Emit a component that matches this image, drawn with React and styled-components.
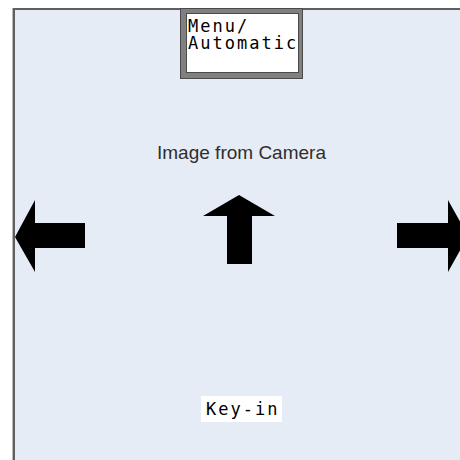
import React from "react";
import styled, { createGlobalStyle } from "styled-components";

const Global = createGlobalStyle`
  html, body { margin: 0; padding: 0; background: #ffffff; overflow: hidden; }
  body { width: 460px; height: 460px; }
`;

const Page = styled.div`
  padding: 8px 0 0 13px;
  width: 460px;
  height: 460px;
  box-sizing: border-box;
  overflow: hidden;
`;

const Panel = styled.div`
  width: 455px;
  height: 470px;
  box-sizing: border-box;
  background: #e6ecf6;
  border-left: 2px solid #5f5f5f;
  border-top: 2px solid #5f5f5f;
  box-shadow: -1px 0 0 #b8b8b8;
  display: flex;
  flex-direction: column;
  align-items: center;
`;

const MenuBox = styled.div`
  margin-top: -2px;
  width: 123px;
  height: 71px;
  box-sizing: border-box;
  border: 1px solid #4a4a4a;
  background: #808080;
  padding: 4px 4px 5px 5px;
  display: flex;
`;

const MenuInner = styled.div`
  flex: 1;
  background: #ffffff;
  border: 1px solid #4a4a4a;
  padding: 4px 0 0 1px;
`;

const MonoText = styled.div`
  font-family: "DejaVu Sans Mono", "Liberation Mono", monospace;
  font-size: 17px;
  line-height: 17px;
  letter-spacing: 2px;
  color: #000;
  white-space: pre;
`;

const Caption = styled.div`
  margin-top: 64px;
  font-family: "Liberation Sans", Arial, sans-serif;
  font-size: 19px;
  line-height: 20px;
  color: #2e2e2e;
`;

const ArrowRow = styled.div`
  margin-top: 32px;
  width: 100%;
  display: flex;
  justify-content: space-between;
  align-items: flex-start;
`;

const SideArrow = styled.svg`
  display: block;
  margin-top: 5px;
  flex: none;
`;

const UpArrow = styled.svg`
  display: block;
  flex: none;
  margin-right: 4px;
`;

const KeyIn = styled.div`
  margin-top: 124px;
  width: 81px;
  height: 26px;
  background: #ffffff;
  display: flex;
  align-items: center;
  padding-left: 5px;
  box-sizing: border-box;
`;

export default function App() {
  return (
    <>
      <Global />
      <Page>
        <Panel>
          <MenuBox>
            <MenuInner>
              <MonoText>{"Menu/\nAutomatic"}</MonoText>
            </MenuInner>
          </MenuBox>
          <Caption>Image from Camera</Caption>
          <ArrowRow>
            <SideArrow width="70" height="72" viewBox="0 0 70 72">
              <polygon points="0,37 20,0 20,23 70,23 70,48 20,48 20,72" fill="#000" />
            </SideArrow>
            <UpArrow width="72" height="69" viewBox="0 0 72 69">
              <polygon points="36,0 72,21 49,21 49,69 24,69 24,21 0,21" fill="#000" />
            </UpArrow>
            <SideArrow width="71" height="72" viewBox="0 0 71 72">
              <polygon points="71,36 51,0 51,23 0,23 0,48 51,48 51,72" fill="#000" />
            </SideArrow>
          </ArrowRow>
          <KeyIn>
            <MonoText>Key-in</MonoText>
          </KeyIn>
        </Panel>
      </Page>
    </>
  );
}
